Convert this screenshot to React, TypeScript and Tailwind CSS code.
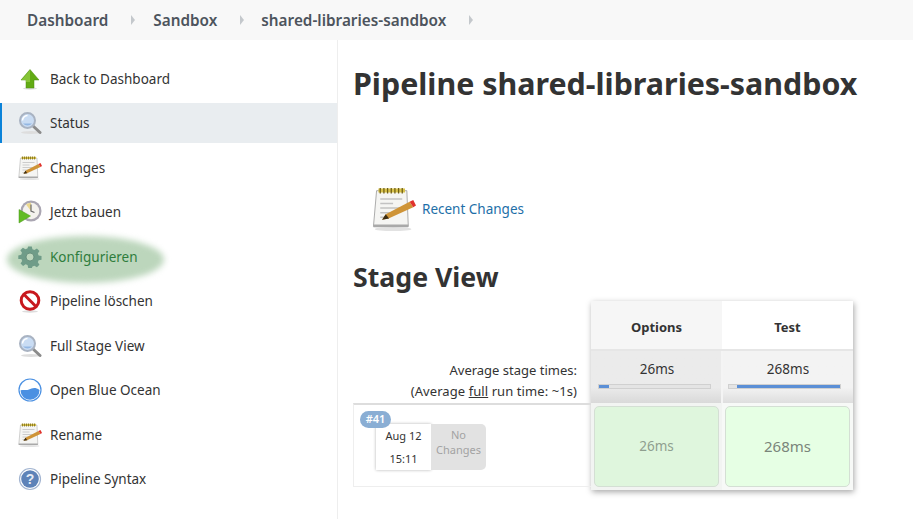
import type { ReactNode } from 'react';

const MagnifierIcon = () => (
  <svg width="24" height="24" viewBox="0 0 24 24">
    <ellipse cx="13" cy="21.5" rx="10" ry="1.5" fill="#ddd" />
    <path d="M14.5 14.5 L22 21.5" stroke="#8b8b8b" strokeWidth="3" strokeLinecap="round" />
    <circle cx="9.5" cy="9.5" r="7.5" fill="#c9dcf3" stroke="#a9b3c2" strokeWidth="2" />
    <path d="M4.5 9.5a5 5 0 0 1 5-5" stroke="#fff" strokeWidth="1.5" fill="none" />
    <path d="M5 12.5a6 6 0 0 0 9 0z" fill="#93b7e3" />
  </svg>
);

const NotepadIcon = ({ size = 24 }: { size?: number }) => (
  <svg width={size} height={size} viewBox="0 0 24 24">
    <ellipse cx="11.500" cy="23" rx="10" ry="1" fill="#e2e2e2" />
    <path d="M2.500 2h16.500l0.800 19.500H0.800z" fill="#f5f5f3" stroke="#a5a5a5" strokeWidth="0.5" />
    <path d="M0.800 20.500h19v1.500h-19z" fill="#a9a9a9" />
    <path d="M3.500 0.800h14.500v2.200H3.500z" fill="#d8c24a" />
    <path d="M4.500 0.500v3M6.500 0.500v3M8.500 0.500v3M10.500 0.500v3M12.500 0.500v3M14.500 0.500v3M16.500 0.500v3" stroke="#6f5f18" strokeWidth="0.7" />
    <path d="M4.500 6.500h12M4.500 9h7M4.500 11.500h11M4.500 14h7M4.500 16.500h5" stroke="#c2c2c2" strokeWidth="0.8" />
    <path d="M5.500 17.800l2-3L20.500 8l2 3-13.500 6.200z" fill="#cf9437" />
    <path d="M5.500 17.800l2-3 1.800 2.400z" fill="#3a2b12" />
    <path d="M20.500 8l2 3 1.500-.9-1.500-3z" fill="#e0322c" />
  </svg>
);

const UpArrowIcon = () => (
  <svg width="24" height="24" viewBox="0 0 24 24">
    <ellipse cx="12" cy="21.500" rx="7" ry="1.200" fill="#ddd" />
    <path d="M12 2.500 L21 13 H16 V21 H8 V13 H3 Z" fill="#62ab14" stroke="#4f8f10" strokeWidth="0.5" />
    <path d="M12 3 L3.500 13 H8 V15 H12z" fill="#86c436" />
  </svg>
);

const BuildIcon = () => (
  <svg width="24" height="24" viewBox="0 0 24 24">
    <circle cx="13" cy="11" r="10.500" fill="#aaa6b2" />
    <circle cx="13" cy="11" r="8.300" fill="#f4f2ee" />
    <path d="M13 2.700a8.300 8.300 0 0 0-5 1.700l5 6.600z" fill="#ecd98f" />
    <path d="M13 4.500v6.500l3.500 1.500" stroke="#6a6a6a" strokeWidth="1.200" fill="none" />
    <path d="M1 9.500 L12.500 16 L1 23 Z" fill="#62bb25" stroke="#4a9a1c" strokeWidth="0.5" />
  </svg>
);

const GearIcon = () => (
  <svg width="24" height="24" viewBox="0 0 24 24">
    <path
      d="M10 1h4l.7 3.200 2.200.9 2.800-1.800 2.800 2.800-1.800 2.800.9 2.200 3.200.7v4l-3.200.7-.9 2.200 1.800 2.800-2.800 2.800-2.800-1.800-2.200.9L14 25h-4l-.7-3.200-2.200-.9-2.800 1.800-2.800-2.800 1.800-2.800-.9-2.200L-1 15v-4l3.200-.7.9-2.200-1.800-2.800 2.800-2.800 2.800 1.800 2.200-.9z"
      transform="translate(1.200 0.500) scale(0.9)"
      fill="#6f9c88"
    />
    <circle cx="12" cy="12" r="4" fill="#bcd6bc" stroke="#5d8675" strokeWidth="0.8" />
  </svg>
);

const DeleteIcon = () => (
  <svg width="24" height="24" viewBox="0 0 24 24">
    <ellipse cx="12" cy="22.500" rx="8" ry="1.200" fill="#ddd" />
    <circle cx="12" cy="11.500" r="8.800" fill="#fff" stroke="#c8181e" strokeWidth="3" />
    <path d="M5.800 5.300 L18.200 17.700" stroke="#c8181e" strokeWidth="3" />
  </svg>
);

const OceanIcon = () => (
  <svg width="24" height="24" viewBox="0 0 24 24">
    <circle cx="12" cy="12" r="11" fill="#fff" stroke="#4a90e2" strokeWidth="1.200" />
    <path d="M2.500 12.500c3-1.500 5 .5 8.500-1 3-1.300 6-3 10.500 0.500a9.500 9.500 0 0 1-19 .5z" fill="#4a90e2" />
  </svg>
);

const HelpIcon = () => (
  <svg width="24" height="24" viewBox="0 0 24 24">
    <circle cx="12" cy="12" r="10.500" fill="#fff" stroke="#a3b5d1" strokeWidth="1.200" />
    <circle cx="12" cy="12" r="8.800" fill="#5d82b8" />
    <text x="12" y="17" textAnchor="middle" fontSize="14" fontWeight="700" fill="#e4ebf5" fontFamily="Liberation Sans, sans-serif">?</text>
  </svg>
);

const Chevron = () => (
  <span className="block w-0 h-0 border-y-[5px] border-y-transparent border-l-[4px] border-l-[#c4c8cc]" />
);

type Item = { label: string; icon: ReactNode; active?: boolean; green?: boolean };

const items: Item[] = [
  { label: 'Back to Dashboard', icon: <UpArrowIcon /> },
  { label: 'Status', icon: <MagnifierIcon />, active: true },
  { label: 'Changes', icon: <NotepadIcon /> },
  { label: 'Jetzt bauen', icon: <BuildIcon /> },
  { label: 'Konfigurieren', icon: <GearIcon />, green: true },
  { label: 'Pipeline löschen', icon: <DeleteIcon /> },
  { label: 'Full Stage View', icon: <MagnifierIcon /> },
  { label: 'Open Blue Ocean', icon: <OceanIcon /> },
  { label: 'Rename', icon: <NotepadIcon /> },
  { label: 'Pipeline Syntax', icon: <HelpIcon /> },
];

const Sidebar = () => (
  <aside className="w-[338px] h-[479px] shrink-0 border-r border-[#eeeeee] pt-[18.9px] flex flex-col gap-[4.5px]">
    {items.map((item) => (
      <div
        key={item.label}
        className={`relative h-10 flex items-center gap-[8px] text-[13.5px] ${
          item.active ? 'bg-[#e9edf0] border-l-2 border-[#0b83d9] pl-[16px]' : 'pl-[18px]'
        } ${item.green ? 'text-[#2f7d3c]' : 'text-[#333333]'}`}
      >
        {item.green && (
          <div className="absolute left-[7px] top-[-1px] w-[157px] h-[47px] rounded-[50%] bg-[#bcd6bc] blur-[3px]" />
        )}
        <span className="relative w-6 h-6 shrink-0">{item.icon}</span>
        <span className="relative">{item.label}</span>
      </div>
    ))}
  </aside>
);

const StageTable = () => (
  <div className="flex text-[#333333]">
    <div className="w-[238px] shrink-0 flex flex-col text-[13px]">
      <div className="h-[102px] flex flex-col justify-end items-end pr-[14px] pb-[1px] leading-[21px]">
        <span>Average stage times:</span>
        <span className="tracking-[0.08px]">
          (Average <span className="underline">full</span> run time: ~1s)
        </span>
      </div>
      <div className="relative h-[84px] border-t-2 border-[#dddddd] border-l border-b border-l-[#eeeeee] border-b-[#eeeeee]">
        <div className="absolute left-[22px] top-[19px] flex h-[46px]">
          <div className="w-[55px] bg-white shadow-[0_0_3px_rgba(0,0,0,0.3)] flex flex-col items-center pt-[3px] gap-[6px] text-[11px] leading-[17px]">
            <span>Aug 12</span>
            <span>15:11</span>
          </div>
          <div className="w-[55px] bg-[#e2e2e2] rounded-r-[5px] flex flex-col items-center pt-[3px] text-[11px] leading-[15px] text-[#a3a3a3]">
            <span>No</span>
            <span>Changes</span>
          </div>
        </div>
        <span className="absolute left-[6px] top-[6px] w-[31px] h-[17px] rounded-full bg-[#8aaed4] text-white text-[11px] font-semibold flex items-center justify-center">
          #41
        </span>
      </div>
    </div>
    <div className="w-[262px] h-[189px] shrink-0 grid grid-cols-2 grid-rows-[50px_52px_87px] shadow-[1px_2px_6px_rgba(0,0,0,0.35)] bg-[#f4f4f4] text-[13.5px]">
      <div className="bg-[#f6f6f6] border-b-2 border-[#e6e6e6] font-bold flex items-center justify-center pt-[5px] text-[13px]">Options</div>
      <div className="bg-white border-b-2 border-[#e6e6e6] font-bold flex items-center justify-center pt-[5px] text-[13px]">Test</div>
      <div className="bg-gradient-to-b from-[#ebebeb] from-70% to-[#d9d9d9] flex flex-col pt-[9px] mr-px">
        <span className="leading-[19px] text-center pl-[2px]">26ms</span>
        <div className="w-[113px] h-[5px] mt-[5px] ml-[7px] bg-[#e4e4e4] border border-[#d0d0d0]">
          <div className="w-[10px] h-full bg-[#5b8fd6]" />
        </div>
      </div>
      <div className="bg-gradient-to-b from-[#f3f3f3] from-70% to-[#dedede] flex flex-col pt-[9px] ml-px">
        <span className="leading-[19px] text-center">268ms</span>
        <div className="w-[113px] h-[5px] mt-[5px] ml-[5px] bg-[#e4e4e4] border border-[#d0d0d0] flex justify-end">
          <div className="w-[103px] h-full bg-[#5b8fd6]" />
        </div>
      </div>
      <div className="p-[3px] bg-[#f2f4f2]">
        <div className="h-full bg-[#dff6dd] border border-[#d4dfd4] rounded-[5px] flex items-center justify-center text-[13.5px] text-[#8f9f8f]">
          26ms
        </div>
      </div>
      <div className="p-[3px] bg-[#f7f9f7]">
        <div className="h-full bg-[#e6ffe4] border border-[#d4dfd4] rounded-[5px] flex items-center justify-center text-[15px] text-[#7a857a]">
          268ms
        </div>
      </div>
    </div>
  </div>
);

const App = () => {
  return (
    <div className="w-[913px] h-[519px] overflow-hidden bg-white font-['Noto_Sans','Open_Sans',sans-serif]">
      <nav className="h-10 bg-[#f8f8f8] flex items-center pl-[27px] text-[15.300px] font-semibold text-[#4d545d]">
        <span>Dashboard</span>
        <span className="ml-[23px] mr-[18px]"><Chevron /></span>
        <span>Sandbox</span>
        <span className="ml-[23px] mr-[17px]"><Chevron /></span>
        <span>shared-libraries-sandbox</span>
        <span className="ml-[23px]"><Chevron /></span>
      </nav>
      <div className="flex">
        <Sidebar />
        <main className="pl-[15px] pt-[25px]">
          <h1 className="text-[30.4px] leading-[38px] font-bold text-[#333333]">Pipeline shared-libraries-sandbox</h1>
          <div className="flex items-center gap-[6px] mt-[84px] ml-[19px] h-[44px]">
            <NotepadIcon size={44} />
            <span className="text-[13.5px] text-[#1e6fa8]">Recent Changes</span>
          </div>
          <h2 className="text-[26.7px] leading-[34px] font-bold text-[#333333] mt-[29px] mb-[7px]">Stage View</h2>
          <StageTable />
        </main>
      </div>
    </div>
  );
};

export default App;
